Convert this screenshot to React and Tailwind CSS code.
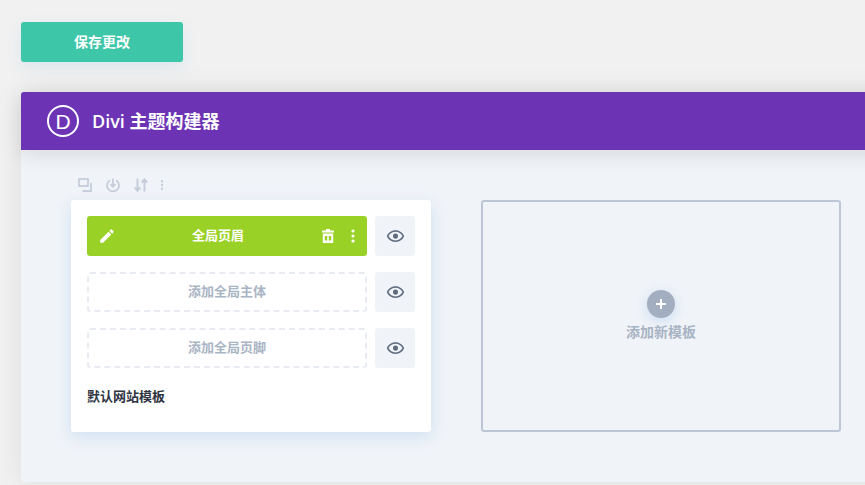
const CJK = "font-['Open_Sans','Noto_Sans_CJK_SC',sans-serif]"

function Eye() {
  return (
    <svg width="19" height="19" viewBox="0 0 24 24" className="fill-[#5f6b7f]">
      <path d="M12 6c3.79 0 7.17 2.13 8.82 5.5C19.17 14.87 15.79 17 12 17s-7.17-2.13-8.82-5.5C4.83 8.13 8.21 6 12 6m0-2C7 4 2.73 7.11 1 11.5 2.73 15.89 7 19 12 19s9.27-3.11 11-7.5C21.27 7.11 17 4 12 4z" />
      <circle cx="12" cy="11.5" r="3.2" />
    </svg>
  )
}

function EyeButton() {
  return (
    <div className="w-10 h-10 rounded-[3px] bg-[#f0f3f8] flex items-center justify-center shrink-0">
      <Eye />
    </div>
  )
}

function Dots({ className }) {
  return (
    <svg width="4" height="14" viewBox="0 0 4 14" className={className}>
      <circle cx="2" cy="2" r="1.6" />
      <circle cx="2" cy="7" r="1.6" />
      <circle cx="2" cy="12" r="1.6" />
    </svg>
  )
}

function Toolbar() {
  return (
    <div className="h-[50px] pl-[7px] pb-[8px] flex items-end gap-[14px]">
      <svg width="14" height="14" viewBox="0 0 14 14" fill="none" className="stroke-[#c6cedb]" strokeWidth="1.8">
        <rect x="1" y="1" width="9" height="7" />
        <path d="M13 5v8H4.5" />
      </svg>
      <svg width="14" height="14" viewBox="0 0 14 14" fill="none" className="stroke-[#c6cedb]" strokeWidth="1.8">
        <path d="M4 2.2a6 6 0 1 0 6 0" />
        <path d="M7 0.5v8M4.5 6.2 7 8.8l2.5-2.6" />
      </svg>
      <svg width="14" height="14" viewBox="0 0 14 14" fill="none" className="stroke-[#c6cedb]" strokeWidth="2">
        <path d="M3.5 0.5v12M0.8 9.5l2.7 3.2 2.7-3.2" />
        <path d="M10.5 13.5v-12M7.8 4.5l2.7-3.2 2.7 3.2" />
      </svg>
      <Dots className="fill-[#c6cedb] ml-[-2px] scale-75" />
    </div>
  )
}

function AddRow({ label }) {
  return (
    <div className="flex gap-2">
      <div className="w-[280px] h-10 rounded-[3px] border-2 border-dashed border-[#e8ecf2] flex items-center justify-center text-[13px] font-bold text-[#a9b4c4]">
        {label}
      </div>
      <EyeButton />
    </div>
  )
}

export default function App() {
  return (
    <div className={`w-[865px] h-[485px] overflow-hidden bg-[#f1f1f1] pt-[22px] pl-[21px] ${CJK}`}>
      <div className="w-[162px] h-10 rounded-[3px] bg-[#3dc6a8] shadow-[0_5px_15px_rgba(43,135,218,0.1)] flex items-center justify-center pb-[2px] text-white text-[14px] font-bold">
        保存更改
      </div>

      <div className="mt-[30px] w-[900px] h-[390px] rounded-[3px] bg-[#f0f3f8] shadow-[0_0_30px_rgba(0,0,0,0.08)]">
        <div className="relative h-[58px] bg-[#6c33b5] rounded-t-[3px] pl-[26px] flex items-center gap-[13px] text-white shadow-[0_5px_20px_rgba(0,0,0,0.1)]">
          <div className="w-[32px] h-[32px] rounded-full border-2 border-white flex items-center justify-center text-[21px] leading-none font-['Liberation_Sans',sans-serif]">
            D
          </div>
          <div className="text-[18px] font-semibold">Divi 主题构建器</div>
        </div>

        <div className="pl-[50px] flex gap-[50px]">
          <div className="w-[360px]">
            <Toolbar />
            <div className="h-[232px] rounded-[3px] bg-white shadow-[0_5px_15px_rgba(43,135,218,0.16)] p-4 flex flex-col gap-4">
              <div className="flex gap-2">
                <div className="w-[280px] h-10 rounded-[3px] bg-[#9ad127] flex items-center pl-[11px] pr-[12px] text-white text-[13px] font-bold">
                  <svg width="18" height="18" viewBox="0 0 24 24" className="fill-white">
                    <path d="M3 17.25V21h3.75L17.81 9.94l-3.75-3.75L3 17.25zM20.71 7.04c.39-.39.39-1.02 0-1.41l-2.34-2.34c-.39-.39-1.02-.39-1.41 0l-1.83 1.83 3.75 3.75 1.83-1.83z" />
                  </svg>
                  <span className="flex-1 text-center pr-[2px]">全局页眉</span>
                  <svg width="12" height="14" viewBox="0 0 12 14" className="fill-white mr-[17px]">
                    <path fillRule="evenodd" d="M4 0h4v1.5h4v2H0v-2h4zM0.8 4.5h10.4V14H0.8zM2.8 7v4.5h2.4V7zM6.8 7v4.5h2.4V7z" />
                  </svg>
                  <Dots className="fill-white" />
                </div>
                <EyeButton />
              </div>
              <AddRow label="添加全局主体" />
              <AddRow label="添加全局页脚" />
              <div className="text-[13px] font-bold text-[#2e3440] leading-[18px] mt-[3px]">默认网站模板</div>
            </div>
          </div>

          <div className="mt-[50px] w-[360px] h-[232px] rounded-[3px] border-2 border-[#bcc6d6] flex flex-col items-center pt-[88px] gap-[5px]">
            <div className="w-7 h-7 rounded-full bg-[#a3afc0] shadow-[0_3px_12px_rgba(43,135,218,0.2)] flex items-center justify-center">
              <svg width="10" height="10" viewBox="0 0 10 10" className="fill-white">
                <path d="M4 0h2v4h4v2H6v4H4V6H0V4h4z" />
              </svg>
            </div>
            <div className="text-[14px] font-bold text-[#a9b4c4] leading-[18px]">添加新模板</div>
          </div>
        </div>
      </div>
    </div>
  )
}
